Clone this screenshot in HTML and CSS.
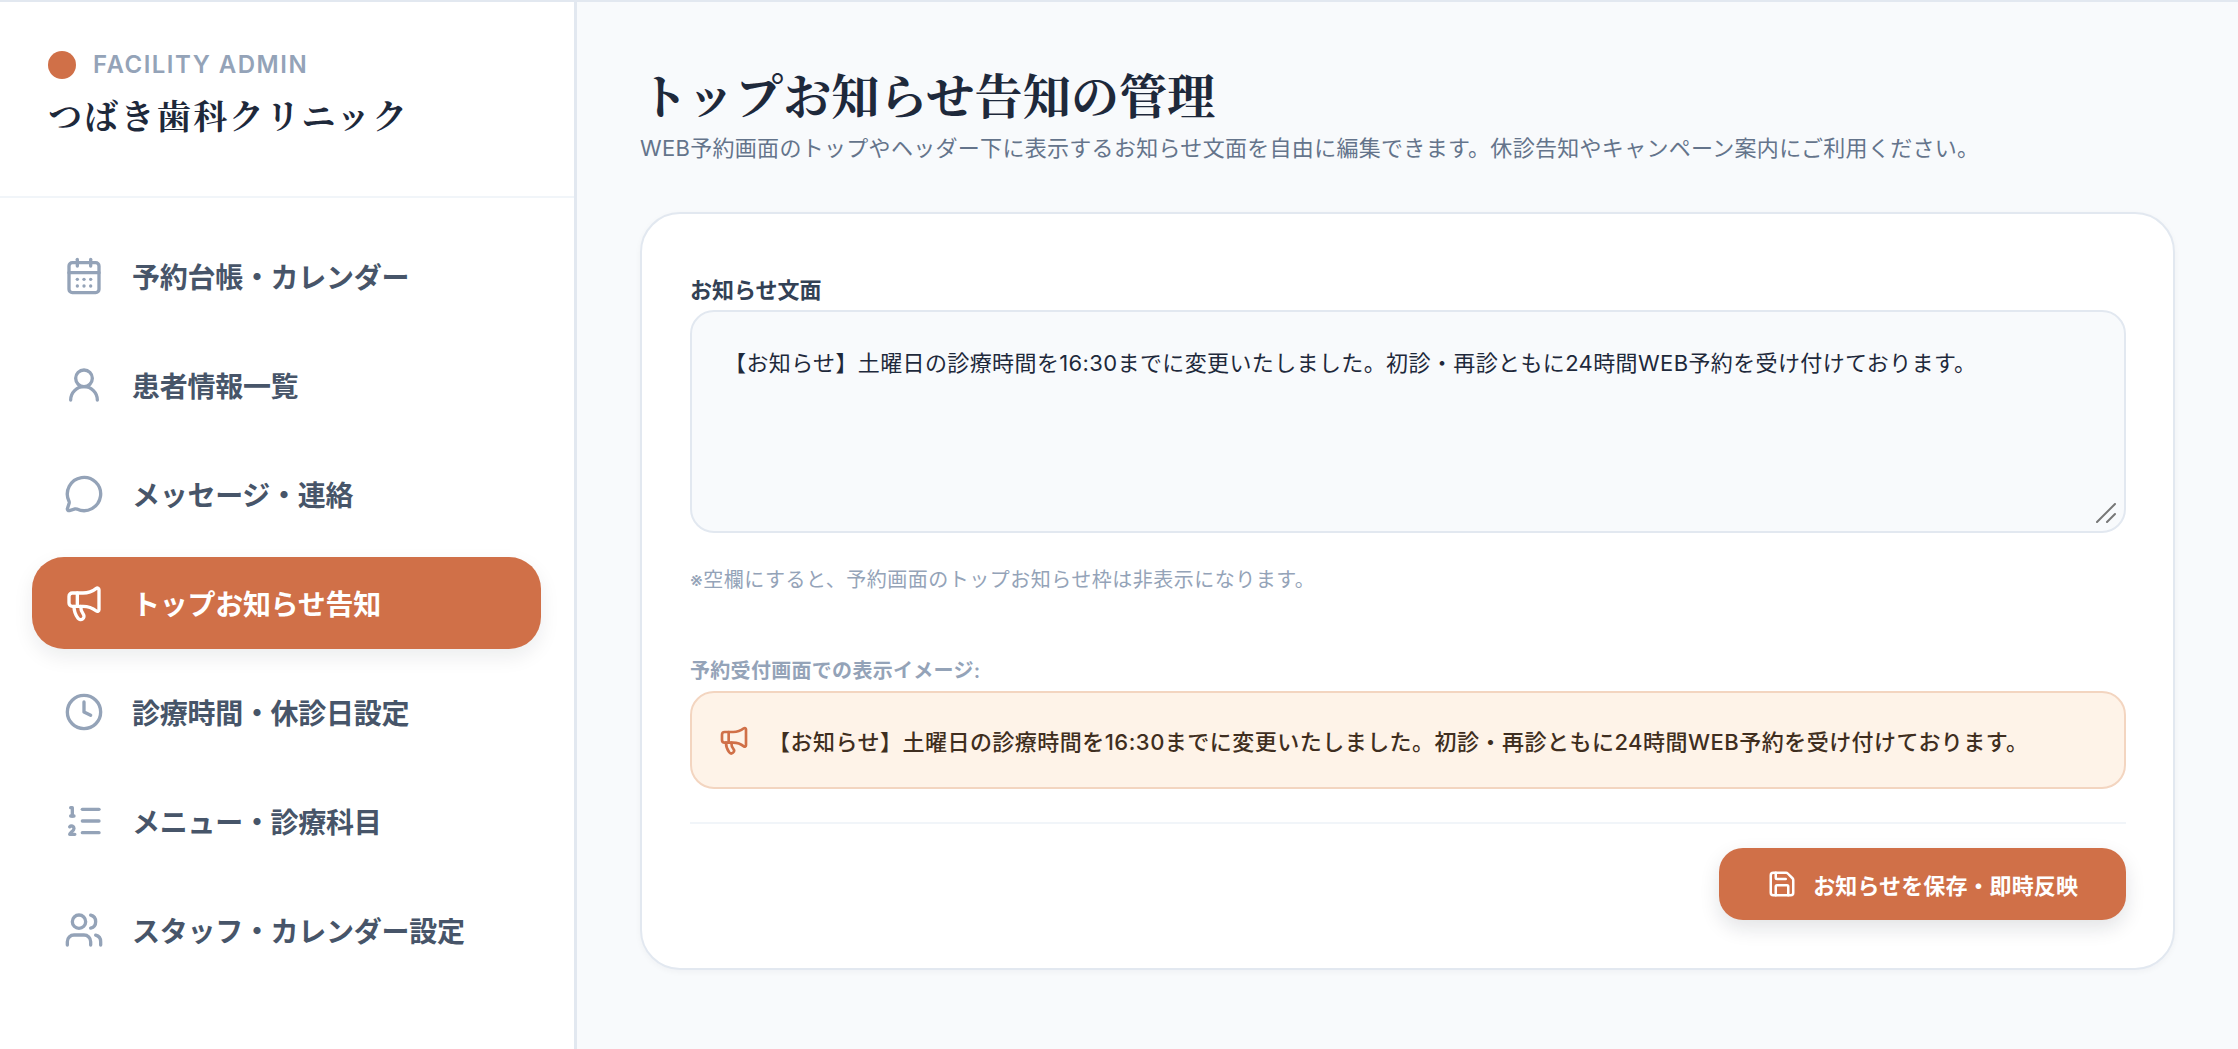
FILE: index.html
```html
<!DOCTYPE html>
<html lang="ja">
<head>
  <meta charset="UTF-8" />
  <meta name="viewport" content="width=device-width, initial-scale=1.0"/>
  <title>トップお知らせ告知の管理</title>
  <link rel="stylesheet" href="styles.css">
</head>
<body>

<div class="layout">
  <!-- Sidebar -->
  <aside class="sidebar">
    <div class="brand">
      <div class="brand-top">
        <span class="brand-dot"></span>
        <span class="brand-label">FACILITY ADMIN</span>
      </div>
      <div class="brand-name">つばき歯科クリニック</div>
    </div>

    <nav class="nav">
      <a class="nav-item" href="#">
        <svg class="icon" viewBox="0 0 24 24"><path d="M8 2v4"/><path d="M16 2v4"/><rect x="3" y="4" width="18" height="18" rx="2"/><path d="M3 10h18"/><path d="M8 14h.01"/><path d="M12 14h.01"/><path d="M16 14h.01"/><path d="M8 18h.01"/><path d="M12 18h.01"/><path d="M16 18h.01"/></svg>
        <span>予約台帳・カレンダー</span>
      </a>
      <a class="nav-item" href="#">
        <svg class="icon" viewBox="0 0 24 24"><circle cx="12" cy="8" r="5"/><path d="M20 21a8 8 0 0 0-16 0"/></svg>
        <span>患者情報一覧</span>
      </a>
      <a class="nav-item" href="#">
        <svg class="icon" viewBox="0 0 24 24"><path d="M2.992 16.342a2 2 0 0 1 .094 1.167l-1.065 3.29a1 1 0 0 0 1.236 1.168l3.413-.998a2 2 0 0 1 1.099.092 10 10 0 1 0-4.777-4.719"/></svg>
        <span>メッセージ・連絡</span>
      </a>
      <a class="nav-item active" href="#">
        <svg class="icon" viewBox="0 0 24 24"><path d="M11 6a13 13 0 0 0 8.4-2.8A1 1 0 0 1 21 4v12a1 1 0 0 1-1.6.8A13 13 0 0 0 11 14H5a2 2 0 0 1-2-2V8a2 2 0 0 1 2-2z"/><path d="M6 14a12 12 0 0 0 2.4 7.2 2 2 0 0 0 3.2-2.4A8 8 0 0 1 10 14"/><path d="M8 6v8"/></svg>
        <span>トップお知らせ告知</span>
      </a>
      <a class="nav-item" href="#">
        <svg class="icon" viewBox="0 0 24 24"><circle cx="12" cy="12" r="10"/><path d="M12 6v6l4 2"/></svg>
        <span>診療時間・休診日設定</span>
      </a>
      <a class="nav-item" href="#">
        <svg class="icon" viewBox="0 0 24 24"><path d="M11 5h10"/><path d="M11 12h10"/><path d="M11 19h10"/><path d="M4 4h1v5"/><path d="M4 9h2"/><path d="M6.5 20H3.4c0-1 2.6-1.925 2.6-3.5a1.5 1.5 0 0 0-2.6-1.02"/></svg>
        <span>メニュー・診療科目</span>
      </a>
      <a class="nav-item" href="#">
        <svg class="icon" viewBox="0 0 24 24"><path d="M16 21v-2a4 4 0 0 0-4-4H6a4 4 0 0 0-4 4v2"/><path d="M16 3.128a4 4 0 0 1 0 7.744"/><path d="M22 21v-2a4 4 0 0 0-3-3.87"/><circle cx="9" cy="7" r="4"/></svg>
        <span>スタッフ・カレンダー設定</span>
      </a>
    </nav>
  </aside>

  <!-- Main content -->
  <main class="main">
    <h1>トップお知らせ告知の管理</h1>
    <p class="subtitle">WEB予約画面のトップやヘッダー下に表示するお知らせ文面を自由に編集できます。休診告知やキャンペーン案内にご利用ください。</p>

    <section class="card">
      <label class="field-label" for="notice">お知らせ文面</label>
      <div class="notice-wrap">
        <textarea id="notice" class="notice-input">【お知らせ】土曜日の診療時間を16:30までに変更いたしました。初診・再診ともに24時間WEB予約を受け付けております。</textarea>
        <svg class="resize-grip" viewBox="0 0 20 20"><path d="M1 19 19 1"/><path d="M11 19 19 11"/></svg>
      </div>
      <p class="hint">※空欄にすると、予約画面のトップお知らせ枠は非表示になります。</p>

      <div class="preview-label">予約受付画面での表示イメージ:</div>
      <div class="preview">
        <svg class="icon preview-icon" viewBox="0 0 24 24"><path d="M11 6a13 13 0 0 0 8.4-2.8A1 1 0 0 1 21 4v12a1 1 0 0 1-1.6.8A13 13 0 0 0 11 14H5a2 2 0 0 1-2-2V8a2 2 0 0 1 2-2z"/><path d="M6 14a12 12 0 0 0 2.4 7.2 2 2 0 0 0 3.2-2.4A8 8 0 0 1 10 14"/><path d="M8 6v8"/></svg>
        <span>【お知らせ】土曜日の診療時間を16:30までに変更いたしました。初診・再診ともに24時間WEB予約を受け付けております。</span>
      </div>

      <div class="card-footer">
        <button class="save-btn" type="button">
          <svg class="icon save-icon" viewBox="0 0 24 24"><path d="M15.2 3a2 2 0 0 1 1.4.6l3.8 3.8a2 2 0 0 1 .6 1.4V19a2 2 0 0 1-2 2H5a2 2 0 0 1-2-2V5a2 2 0 0 1 2-2z"/><path d="M17 21v-7a1 1 0 0 0-1-1H8a1 1 0 0 0-1 1v7"/><path d="M7 3v4a1 1 0 0 0 1 1h7"/></svg>
          <span>お知らせを保存・即時反映</span>
        </button>
      </div>
    </section>
  </main>
</div>

</body>
</html>
```

FILE: styles.css
```css
* {
  box-sizing: border-box;
}

html, body {
  height: 100%;
}

body {
  margin: 0;
  font-family: Inter, "Noto Sans CJK JP", sans-serif;
  background: #f8fafc;
  color: #1e293b;
  overflow: hidden;
}

.layout {
  display: flex;
  height: 100%;
  border-top: 2px solid #e2e8f0;
}

/* Sidebar */
.sidebar {
  width: 577px;
  flex-shrink: 0;
  background: #fff;
  border-right: 3px solid #e2e8f0;
}

.brand {
  height: 196px;
  padding: 49px 48px 0;
  border-bottom: 2px solid #f1f5f9;
}

.brand-top {
  display: flex;
  align-items: center;
  gap: 17px;
}

.brand-dot {
  width: 28px;
  height: 28px;
  border-radius: 50%;
  background: #d07048;
}

.brand-label {
  font-size: 24px;
  line-height: 28px;
  font-weight: 600;
  letter-spacing: 1.5px;
  color: #94a3b8;
}

.brand-name {
  margin-top: 14px;
  font-family: "Noto Serif CJK JP", "Noto Sans CJK JP", serif;
  font-size: 34px;
  line-height: 44px;
  font-weight: 700;
  letter-spacing: 2.3px;
  color: #1e293b;
}

.nav {
  display: flex;
  flex-direction: column;
  gap: 17px;
  padding: 32px 33px 0 32px;
}

.nav-item {
  display: flex;
  align-items: center;
  gap: 28px;
  height: 92px;
  padding: 0 32px;
  border-radius: 32px;
  font-size: 28px;
  font-weight: 600;
  letter-spacing: -0.28px;
  color: #475569;
  text-decoration: none;
}

.nav-item.active {
  background: #d07048;
  color: #fff;
  box-shadow: 0 8px 20px rgba(15, 23, 42, 0.08);
}

.icon {
  width: 40px;
  height: 40px;
  flex-shrink: 0;
  fill: none;
  stroke: #94a3b8;
  stroke-width: 2;
  stroke-linecap: round;
  stroke-linejoin: round;
}

.nav-item.active .icon {
  stroke: #fff;
}

/* Main */
.main {
  flex: 1;
  min-width: 0;
  padding: 60px 63px 0 63px;
}

h1 {
  margin: 0;
  font-family: "Noto Serif CJK JP", "Noto Sans CJK JP", serif;
  font-size: 48px;
  line-height: 64px;
  font-weight: 700;
  letter-spacing: 0.2px;
  color: #1e293b;
}

.subtitle {
  margin: 6px 0 0;
  font-size: 22px;
  line-height: 32px;
  letter-spacing: 0.3px;
  color: #64748b;
}

.card {
  margin-top: 48px;
  padding: 61px 47px 48px 48px;
  background: #fff;
  border: 2px solid #e2e8f0;
  border-radius: 40px;
  box-shadow: 0 2px 6px rgba(15, 23, 42, 0.04);
}

.field-label {
  display: block;
  margin-bottom: 5px;
  font-size: 22px;
  line-height: 30px;
  font-weight: 700;
  color: #334155;
}

.notice-wrap {
  position: relative;
}

.notice-input {
  display: block;
  width: 100%;
  height: 223px;
  padding: 34px 32px;
  background: #f8fafc;
  border: 2px solid #e2e8f0;
  border-radius: 24px;
  font-family: inherit;
  font-size: 22px;
  line-height: 35px;
  letter-spacing: 0.38px;
  color: #1e293b;
  outline: none;
  resize: none;
}

.resize-grip {
  position: absolute;
  right: 10px;
  bottom: 10px;
  width: 20px;
  height: 20px;
  fill: none;
  stroke: #777;
  stroke-width: 2;
  stroke-linecap: round;
}

.hint {
  margin: 32px 0 0;
  font-size: 20px;
  line-height: 30px;
  letter-spacing: 0.5px;
  color: #94a3b8;
}

.preview-label {
  margin: 62px 0 6px;
  font-size: 20px;
  line-height: 28px;
  font-weight: 600;
  letter-spacing: 0.3px;
  color: #94a3b8;
}

.preview {
  display: flex;
  align-items: center;
  gap: 18px;
  height: 98px;
  padding: 0 26px;
  background: #fef3e8;
  border: 2px solid #f3d5c0;
  border-radius: 24px;
  font-size: 22px;
  font-weight: 500;
  letter-spacing: 0.48px;
  color: #3f2e20;
}

.preview-icon {
  width: 32px;
  height: 32px;
  stroke: #d07048;
}

.card-footer {
  display: flex;
  justify-content: flex-end;
  margin-top: 33px;
  padding-top: 24px;
  border-top: 2px solid #f1f5f9;
}

.save-btn {
  display: flex;
  align-items: center;
  gap: 16px;
  height: 72px;
  padding: 0 48px;
  background: #d07048;
  border: none;
  border-radius: 24px;
  box-shadow: 0 8px 20px rgba(15, 23, 42, 0.12);
  font-family: inherit;
  font-size: 22px;
  font-weight: 600;
  letter-spacing: 0.1px;
  color: #fff;
  cursor: pointer;
}

.save-icon {
  width: 30px;
  height: 30px;
  stroke: #fff;
}
```
